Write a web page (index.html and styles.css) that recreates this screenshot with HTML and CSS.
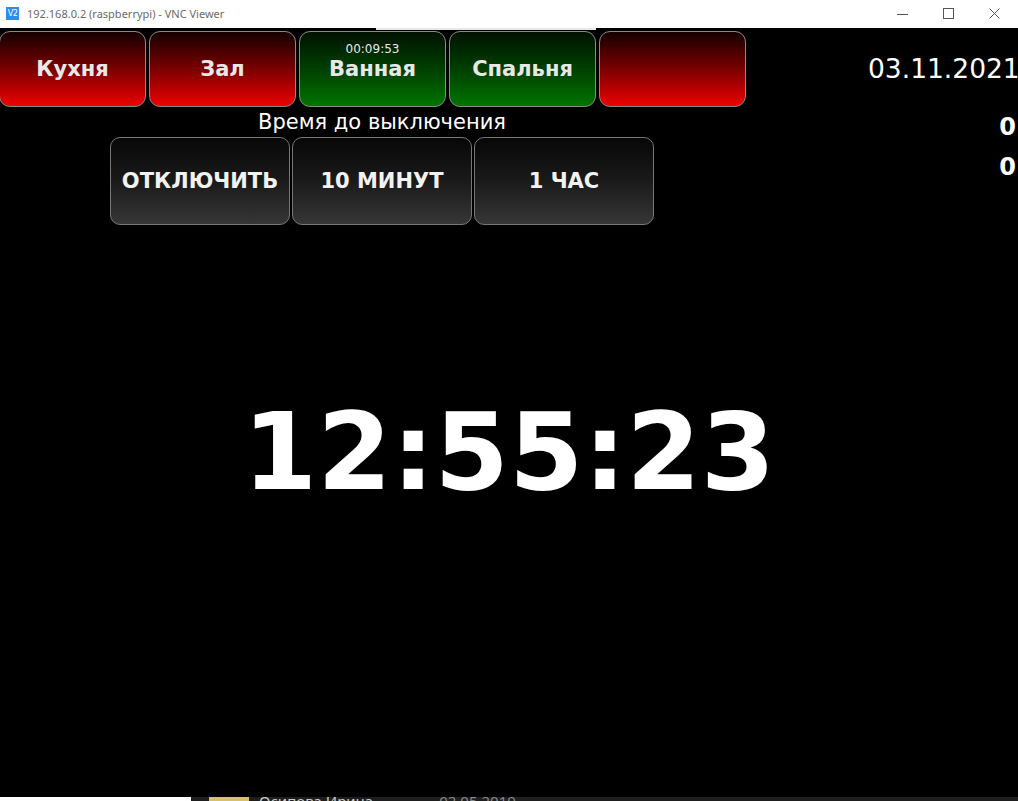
FILE: index.html
```html
<!DOCTYPE html>
<html lang="ru">
<head>
<meta charset="utf-8">
<title>VNC Viewer</title>
<link rel="stylesheet" href="styles.css">
</head>
<body>
<div class="window">
  <div class="titlebar">
    <span class="app-icon">V2</span>
    <span class="title-text">192.168.0.2 (raspberrypi) - VNC Viewer</span>
    <div class="controls">
      <span class="ctl"><svg width="12" height="12" viewBox="0 0 12 12"><path d="M0 6.5H11" stroke="#555" stroke-width="1"/></svg></span>
      <span class="ctl"><svg width="12" height="12" viewBox="0 0 12 12"><rect x="0.5" y="0.5" width="10" height="10" fill="none" stroke="#555" stroke-width="1"/></svg></span>
      <span class="ctl"><svg width="12" height="12" viewBox="0 0 12 12"><path d="M0.5 0.5L10.5 10.5M10.5 0.5L0.5 10.5" stroke="#555" stroke-width="1"/></svg></span>
    </div>
  </div>
  <div class="screen">
    <div class="topline"></div>
    <div class="rooms">
      <div class="room red">Кухня</div>
      <div class="room red">Зал</div>
      <div class="room green"><span class="room-timer">00:09:53</span>Ванная</div>
      <div class="room green">Спальня</div>
      <div class="room red"></div>
      <div class="date">03.11.2021</div>
    </div>
    <div class="middle">
      <div class="timer-panel">
        <div class="timer-label">Время до выключения</div>
        <div class="timer-buttons">
          <div class="tbtn">ОТКЛЮЧИТЬ</div>
          <div class="tbtn">10 МИНУТ</div>
          <div class="tbtn">1 ЧАС</div>
        </div>
      </div>
      <div class="counters">
        <div class="counter">0</div>
        <div class="counter">0</div>
      </div>
    </div>
    <div class="clock">12:55:23</div>
  </div>
  <div class="bottom-strip">
    <div class="strip-white"></div>
    <div class="strip-dark">
      <span class="avatar"></span>
      <span class="strip-name">Осипова Ирина</span>
      <span class="strip-date">02.05.2019</span>
    </div>
  </div>
</div>
</body>
</html>
```
FILE: styles.css
```css
html, body {
  margin: 0;
  padding: 0;
  background: #000;
}
.window {
  width: 1018px;
  height: 801px;
  overflow: hidden;
  display: flex;
  flex-direction: column;
}
.titlebar {
  height: 28px;
  flex: none;
  background: #fff;
  display: flex;
  align-items: center;
  font-family: "Noto Sans", "Open Sans", sans-serif;
  font-size: 11px;
  color: #6a6a6a;
}
.app-icon {
  margin-left: 6px;
  width: 13px;
  height: 13px;
  background: #2d8cf0;
  color: #fff;
  font-family: "DejaVu Sans", sans-serif;
  font-size: 8px;
  line-height: 13px;
  text-align: center;
  letter-spacing: -0.5px;
  margin-top: -1px;
}
.title-text {
  margin-left: 8px;
  margin-top: -1px;
}
.controls {
  margin-left: auto;
  display: flex;
}
.ctl {
  width: 46px;
  height: 28px;
  display: flex;
  align-items: center;
  justify-content: center;
}
.screen {
  flex: 1;
  background: #000;
  display: flex;
  flex-direction: column;
  font-family: "DejaVu Sans", sans-serif;
  color: #fff;
  position: relative;
}
.topline {
  position: absolute;
  left: 376px;
  top: 0;
  width: 220px;
  height: 2px;
  background: #e8e8e8;
}
.rooms {
  display: flex;
  align-items: center;
  padding-top: 3px;
  margin-left: -1px;
  gap: 3px;
  height: 76px;
}
.room {
  flex: none;
  width: 147px;
  height: 76px;
  box-sizing: border-box;
  border: 1px solid #8a8a8a;
  border-radius: 11px;
  display: flex;
  align-items: center;
  justify-content: center;
  font-weight: bold;
  font-size: 21px;
  color: #e8e8e8;
  position: relative;
}
.room.red {
  background: linear-gradient(to bottom, #150000 0%, #7a0000 50%, #ee0000 100%);
}
.room.green {
  background: linear-gradient(to bottom, #001200 0%, #003f00 50%, #007400 100%);
}
.room-timer {
  position: absolute;
  top: 10px;
  left: 0;
  right: 0;
  text-align: center;
  font-weight: normal;
  font-size: 12px;
}
.date {
  margin-left: 119px;
  font-size: 26.5px;
  white-space: nowrap;
  margin-top: -2px;
}
.middle {
  display: flex;
}
.timer-panel {
  margin-left: 110px;
  width: 544px;
  display: flex;
  flex-direction: column;
}
.timer-label {
  height: 30px;
  line-height: 30px;
  text-align: center;
  font-size: 21px;
}
.timer-buttons {
  display: flex;
  gap: 2px;
}
.tbtn {
  width: 180px;
  height: 88px;
  box-sizing: border-box;
  border: 1px solid #777;
  border-radius: 10px;
  background: linear-gradient(to bottom, #070707 0%, #1a1a1a 50%, #363636 100%);
  display: flex;
  align-items: center;
  justify-content: center;
  font-weight: bold;
  font-size: 21px;
  color: #f2f2f2;
}
.counters {
  margin-left: auto;
  padding-right: 2px;
  display: flex;
  flex-direction: column;
}
.counter {
  height: 40px;
  line-height: 40px;
  font-weight: bold;
  font-size: 24px;
  text-align: right;
}
.clock {
  margin-top: 173px;
  text-align: center;
  font-weight: bold;
  font-size: 107px;
  line-height: 108px;
}
.bottom-strip {
  height: 4px;
  flex: none;
  display: flex;
  overflow: hidden;
}
.strip-white {
  width: 191px;
  background: #fff;
}
.strip-dark {
  flex: 1;
  background: #1e1e1e;
  display: flex;
  align-items: flex-start;
  font-family: "Noto Sans", sans-serif;
  font-size: 15px;
  color: #ccc;
  line-height: 15px;
}
.avatar {
  margin-left: 18px;
  width: 40px;
  height: 20px;
  background: #d8c070;
}
.strip-name {
  margin-left: 10px;
  margin-top: -3px;
}
.strip-date {
  margin-left: 66px;
  margin-top: -3px;
  color: #888;
}
```
